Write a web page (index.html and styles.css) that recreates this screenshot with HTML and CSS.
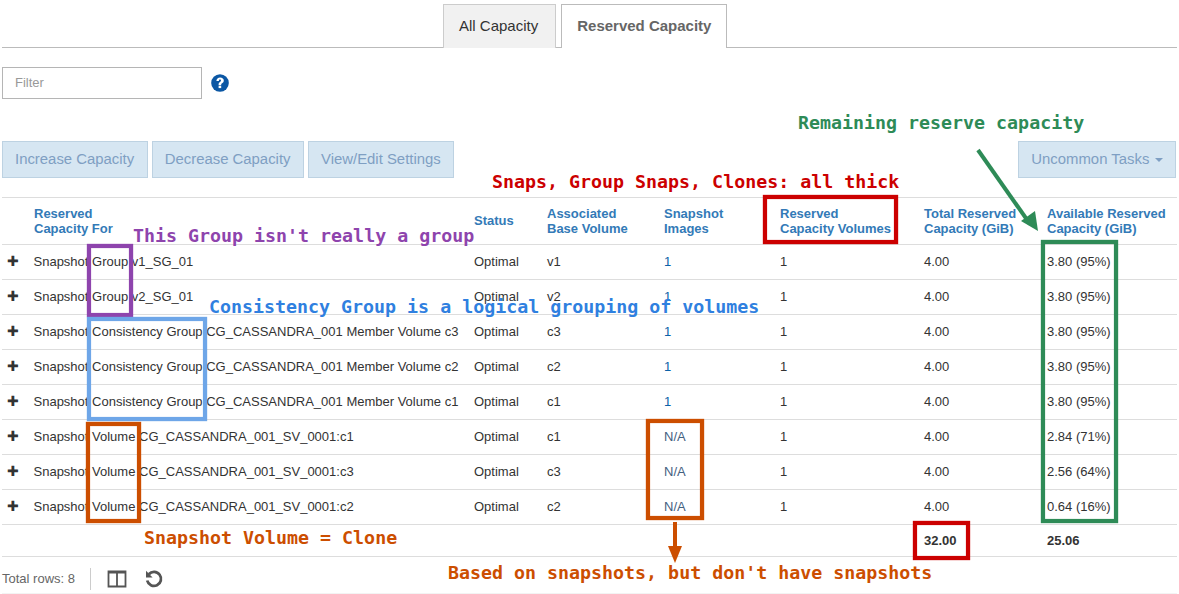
FILE: index.html
```html
<!DOCTYPE html>
<html>
<head>
  <title>Reserved Capacity</title>
  <link rel="stylesheet" href="styles.css">
</head>
<body>
  <div class="page">
    <ul class="tabs">
      <li class="tab">All Capacity</li>
      <li class="tab tab-active">Reserved Capacity</li>
    </ul>

    <div class="filter-row">
      <input class="filter" type="text" placeholder="Filter">
      <svg class="help" width="18" height="18" viewBox="0 0 18 18">
        <circle cx="9" cy="9" r="8.8" fill="#0b57a4"/>
        <path d="M5.400 6.900C5.500 4.700 7 3.400 9.100 3.400c2.200 0 3.700 1.300 3.700 3.100 0 1.400-.8 2.100-1.700 2.700-.7.500-.9.800-.9 1.500v.2H7.600v-.5c0-1.200.5-1.900 1.400-2.500.6-.4 1-.8 1-1.300 0-.6-.4-1-1-1-.7 0-1.100.5-1.100 1.300z" fill="#fff"/>
        <rect x="7.600" y="11.600" width="2.600" height="2.500" fill="#fff"/>
      </svg>
    </div>

    <div class="toolbar">
      <button class="btn" type="button">Increase Capacity</button>
      <button class="btn" type="button">Decrease Capacity</button>
      <button class="btn" type="button">View/Edit Settings</button>
      <button class="btn btn-right" type="button">Uncommon Tasks <span class="caret"></span></button>
    </div>

    <table class="grid">
      <colgroup>
        <col class="c-expand"><col class="c-name"><col class="c-status"><col class="c-base">
        <col class="c-images"><col class="c-volumes"><col class="c-total"><col class="c-avail">
      </colgroup>
      <thead>
        <tr>
          <th></th>
          <th class="th-name">Reserved<br>Capacity For</th>
          <th class="th-single">Status</th>
          <th>Associated<br>Base Volume</th>
          <th>Snapshot<br>Images</th>
          <th>Reserved<br>Capacity Volumes</th>
          <th>Total Reserved<br>Capacity (GiB)</th>
          <th>Available Reserved<br>Capacity (GiB)</th>
        </tr>
      </thead>
      <tbody>
        <tr><td class="plus">&#10010;</td><td class="name">Snapshot Group v1_SG_01</td><td>Optimal</td><td>v1</td><td class="link">1</td><td>1</td><td>4.00</td><td>3.80 (95%)</td></tr>
        <tr><td class="plus">&#10010;</td><td class="name">Snapshot Group v2_SG_01</td><td>Optimal</td><td>v2</td><td class="link">1</td><td>1</td><td>4.00</td><td>3.80 (95%)</td></tr>
        <tr><td class="plus">&#10010;</td><td class="name">Snapshot Consistency Group CG_CASSANDRA_001 Member Volume c3</td><td>Optimal</td><td>c3</td><td class="link">1</td><td>1</td><td>4.00</td><td>3.80 (95%)</td></tr>
        <tr><td class="plus">&#10010;</td><td class="name">Snapshot Consistency Group CG_CASSANDRA_001 Member Volume c2</td><td>Optimal</td><td>c2</td><td class="link">1</td><td>1</td><td>4.00</td><td>3.80 (95%)</td></tr>
        <tr><td class="plus">&#10010;</td><td class="name">Snapshot Consistency Group CG_CASSANDRA_001 Member Volume c1</td><td>Optimal</td><td>c1</td><td class="link">1</td><td>1</td><td>4.00</td><td>3.80 (95%)</td></tr>
        <tr><td class="plus">&#10010;</td><td class="name">Snapshot Volume CG_CASSANDRA_001_SV_0001:c1</td><td>Optimal</td><td>c1</td><td class="na">N/A</td><td>1</td><td>4.00</td><td>2.84 (71%)</td></tr>
        <tr><td class="plus">&#10010;</td><td class="name">Snapshot Volume CG_CASSANDRA_001_SV_0001:c3</td><td>Optimal</td><td>c3</td><td class="na">N/A</td><td>1</td><td>4.00</td><td>2.56 (64%)</td></tr>
        <tr><td class="plus">&#10010;</td><td class="name">Snapshot Volume CG_CASSANDRA_001_SV_0001:c2</td><td>Optimal</td><td>c2</td><td class="na">N/A</td><td>1</td><td>4.00</td><td>0.64 (16%)</td></tr>
      </tbody>
      <tfoot>
        <tr><td colspan="6"></td><td>32.00</td><td>25.06</td></tr>
      </tfoot>
    </table>

    <div class="footer">
      <span class="total-rows">Total rows: 8</span>
      <span class="divider"></span>
      <svg class="icon-cols" width="20" height="18" viewBox="0 0 20 18">
        <path d="M1.500 1.500h17v15h-17zM10 1.500v15" fill="none" stroke="#555" stroke-width="1.800"/>
        <path d="M1.500 1.500h17v2h-17z" fill="#555"/>
      </svg>
      <svg class="icon-reset" width="20" height="20" viewBox="0 0 20 20">
        <path d="M4.800 5.200A7 7 0 1 1 3.200 11.500" fill="none" stroke="#555" stroke-width="2.800"/>
        <path d="M2 1.800v6.600h6.600z" fill="#555"/>
      </svg>
    </div>
    <div class="page-end"></div>

    <!-- annotations drawn over the screenshot -->
    <span class="note note-green n-remaining">Remaining reserve capacity</span>
    <span class="note note-red n-thick">Snaps, Group Snaps, Clones: all thick</span>
    <span class="note note-purple n-group">This Group isn't really a group</span>
    <span class="note note-blue n-cg">Consistency Group is a logical grouping of volumes</span>
    <span class="note note-orange n-clone">Snapshot Volume = Clone</span>
    <span class="note note-orange n-based">Based on snapshots, but don't have snapshots</span>

    <div class="box box-red b-volumes"></div>
    <div class="box box-red b-total"></div>
    <div class="box box-green b-avail"></div>
    <div class="box box-purple b-group"></div>
    <div class="box box-blue b-cg"></div>
    <div class="box box-orange b-volume"></div>
    <div class="box box-orange b-na"></div>

    <svg class="arrows" width="1179" height="594" viewBox="0 0 1179 594">
      <path d="M978 150L1030 224" stroke="#2e8b57" stroke-width="4" fill="none"/>
      <path d="M1038 231L1021 221L1035 211z" fill="#2e8b57"/>
      <path d="M675 522V550" stroke="#cc4e00" stroke-width="4" fill="none"/>
      <path d="M668 546H682L675 563z" fill="#cc4e00"/>
    </svg>
  </div>
</body>
</html>
```

FILE: styles.css
```css
body {
  margin: 0;
  font-family: "Liberation Sans", Arial, sans-serif;
  font-size: 13px;
  color: #333;
  background: #fff;
}

.page {
  position: relative;
  width: 1179px;
  height: 594px;
  overflow: hidden;
  padding: 0 2px;
  box-sizing: border-box;
}

/* tabs */
.tabs {
  display: flex;
  gap: 5px;
  list-style: none;
  margin: 0;
  padding: 4px 0 0 441px;
  height: 48px;
  box-sizing: border-box;
  border-bottom: 1px solid #bbb;
}

.tab {
  padding: 12px 17px 0 15px;
  font-size: 15px;
  background: #f1f1f1;
  border: 1px solid #ccc;
  border-bottom: none;
  margin-bottom: -1px;
}

.tab-active {
  padding-right: 15px;
  background: #fff;
  font-weight: bold;
  color: #666;
  border-color: #bbb;
}

/* filter */
.filter-row {
  display: flex;
  align-items: center;
  gap: 9px;
  margin-top: 19px;
}

.filter {
  width: 200px;
  height: 32px;
  box-sizing: border-box;
  padding: 0 12px 2px;
  border: 1px solid #b5b5b5;
  font-family: inherit;
  font-size: 13px;
}

.filter::placeholder {
  color: #999;
}

/* buttons */
.toolbar {
  display: flex;
  gap: 4px;
  margin-top: 42px;
}

.btn {
  height: 37px;
  padding: 0 12.5px 2px 12px;
  font-family: inherit;
  font-size: 14.9px;
  color: #7f9fc3;
  background: #d6e6f2;
  border: 1px solid #bdd2e2;
}

.btn-right {
  margin-left: auto;
  margin-right: 1px;
}

.caret {
  display: inline-block;
  border-top: 4px solid #7f9fc3;
  border-left: 4px solid transparent;
  border-right: 4px solid transparent;
  vertical-align: middle;
  margin-left: 1px;
}

/* table */
.grid {
  width: 1175px;
  margin-top: 19px;
  border-collapse: collapse;
  table-layout: fixed;
}

.c-expand { width: 31px; }
.c-name { width: 441px; }
.c-status { width: 73px; }
.c-base { width: 117px; }
.c-images { width: 116px; }
.c-volumes { width: 144px; }
.c-total { width: 123px; }
.c-avail { width: 130px; }

.grid th {
  height: 47px;
  box-sizing: border-box;
  padding: 0;
  text-align: left;
  font-size: 13px;
  line-height: 15px;
  color: #337ab7;
  border-top: 1px solid #ddd;
  border-bottom: 1px solid #ddd;
}

.grid .th-name {
  padding-left: 1px;
}

.grid .th-single {
  vertical-align: top;
  padding-top: 15px;
}

.grid td {
  height: 35px;
  padding: 0 0 1px;
  box-sizing: border-box;
  line-height: 15px;
  border-bottom: 1px solid #ddd;
}

.grid .name {
  padding-left: 0.5px;
}

.grid tfoot td {
  height: 32px;
  font-weight: bold;
}

.grid .plus {
  padding-left: 5px;
  font-size: 14px;
  color: #333;
}

.grid .link {
  color: #0b62a8;
}

.grid .na {
  color: #44607f;
}

/* footer */
.footer {
  display: flex;
  align-items: center;
  height: 36px;
  padding-top: 7px;
  box-sizing: border-box;
  color: #666;
}

.divider {
  width: 1px;
  height: 22px;
  margin: 0 16px 0 15px;
  background: #ccc;
}

.icon-cols {
  margin-right: 17px;
}

.page-end {
  height: 2px;
  background: #f3f3f3;
}

/* annotations */
.note {
  position: absolute;
  font-family: "DejaVu Sans Mono", monospace;
  font-weight: bold;
  font-size: 18.3px;
  line-height: 22px;
  white-space: nowrap;
}

.note-green { color: #2e8b57; }
.note-red { color: #cc0000; }
.note-purple { color: #8e44ad; }
.note-blue { color: #2f80e0; }
.note-orange { color: #cc4e00; }

.n-remaining { left: 798px; top: 112px; }
.n-thick { left: 492px; top: 171px; }
.n-group { left: 133px; top: 225px; }
.n-cg { left: 209px; top: 296px; }
.n-clone { left: 144px; top: 527px; }
.n-based { left: 448px; top: 562px; }

.box {
  position: absolute;
  box-sizing: border-box;
  border: 4px solid;
  box-shadow: 0 0 1px, inset 0 0 1px;
}

.box-red { color: #cc0000; }
.box-green { color: #2e8b57; }
.box-purple { color: #8e44ad; }
.box-blue { color: #6ea6e8; }
.box-orange { color: #cc4e00; }

.b-volumes { left: 763px; top: 195px; width: 135px; height: 49px; }
.b-total { left: 913px; top: 521px; width: 57px; height: 39px; }
.b-avail { left: 1041px; top: 240px; width: 77px; height: 283px; }
.b-group { left: 87px; top: 244px; width: 46px; height: 73px; }
.b-cg { left: 87px; top: 317px; width: 120px; height: 104px; }
.b-volume { left: 86px; top: 422px; width: 55px; height: 101px; }
.b-na { left: 646px; top: 419px; width: 58px; height: 101px; }

.arrows {
  position: absolute;
  left: 0;
  top: 0;
  pointer-events: none;
}
```
